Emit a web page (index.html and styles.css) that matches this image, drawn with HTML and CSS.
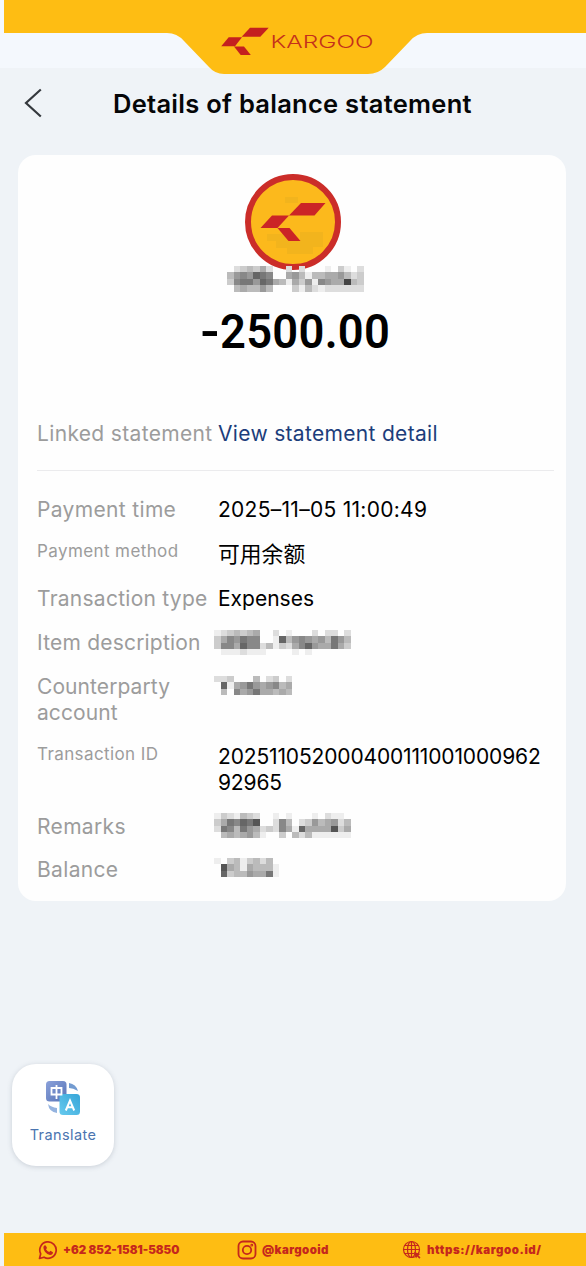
FILE: index.html
```html
<!DOCTYPE html>
<html lang="en">
<head>
<meta charset="utf-8">
<title>Details of balance statement</title>
<link rel="stylesheet" href="styles.css">
</head>
<body>
<div class="page">
  <header class="banner">
    <svg class="banner-art" viewBox="0 0 586 76" width="586" height="76">
      <path fill="#febd13" d="M4 0H586V33H427Q417 33 410 41L385 67Q378 74 368 74H224Q215 74 209 67L184 41Q177 33 167 33H4Z"/>
      <g fill="#c4201f">
        <path d="M250 27.8H268.7L260.3 36.8H241.7Z"/>
        <path d="M228.7 37.2H242L235 46.2H221.2Z"/>
        <path d="M234 46.6H244L250.8 55H240.7Z"/>
      </g>
      <text class="brand" x="270.5" y="47.9" textLength="103" lengthAdjust="spacingAndGlyphs">KARGOO</text>
    </svg>
  </header>
  <div class="titlebar">
    <svg class="back" viewBox="0 0 20 32" width="20" height="32"><path d="M17.8 2.5L3 16L17.8 29.5" fill="none" stroke="#34383d" stroke-width="2.2"/></svg>
    <h1 class="title">Details of balance statement</h1>
  </div>
  <main class="card">
    <div class="summary">
      <svg class="avatar" viewBox="0 0 96 96" width="96" height="96">
        <circle cx="48" cy="48" r="45" fill="#fcb91c" stroke="#cb2d29" stroke-width="6"/>
        <path fill="#edb01f" d="M40 23H53V29H40ZM55 58H78V73H68V80H42V74H31V67H22V60H43V67H55Z" opacity=".65"/>
        <g fill="#cb2426"><path d="M56 29H80.5L69.5 41.5H44Z"/><path d="M27 41.5H44L32.5 54H15.5Z"/><path d="M32.5 54H44.5L55.5 67H43.5Z"/></g>
      </svg>
      <div class="mosaic name"></div>
      <div class="amount"><span class="minus">-</span><span class="digits">2500.00</span></div>
    </div>
    <div class="linked"><span class="label l-linked">Linked statement</span><a class="link">View statement detail</a></div>
    <div class="rows">
      <span class="label l-time">Payment time</span><span class="value v-time">2025–11–05 11:00:49</span>
      <span class="label small">Payment method</span><span class="value cjk" lang="zh">可用余额</span>
      <span class="label l-type">Transaction type</span><span class="value v-type">Expenses</span>
      <span class="label l-item">Item description</span><span class="mosaic item"></span>
      <span class="label l-counter">Counterparty account</span><span class="mosaic account"></span>
      <span class="label small l-id">Transaction ID</span><span class="value v-id">202511052000400111001000962<br>92965</span>
      <span class="label l-remarks">Remarks</span><span class="mosaic remarks"></span>
      <span class="label l-balance">Balance</span><span class="mosaic balance"></span>
    </div>
  </main>
  <div class="translate">
    <svg viewBox="0 0 36 36" width="36" height="36">
      <defs>
        <linearGradient id="a" x1="0" y1="0" x2="1" y2="1"><stop stop-color="#8ba1da"/><stop offset="1" stop-color="#5673b6"/></linearGradient>
        <linearGradient id="b" x1="0" y1="1" x2="1" y2="0"><stop stop-color="#67caee"/><stop offset="1" stop-color="#36a5d8"/></linearGradient>
      </defs>
      <rect x="1" y="1" width="20.5" height="20.5" rx="3.5" fill="url(#a)"/>
      <rect x="14.5" y="14" width="20.5" height="21" rx="3.5" fill="url(#b)"/>
      <path d="M24 3Q31 4 33 11Q28 8 24 8Z" fill="#739bd0"/>
      <path d="M3 24Q4 32 12 33V28Q6 27 3 24Z" fill="#94b3df"/>
      <path d="M6.5 8H16.5V14.5H6.5ZM11.5 5V19" fill="none" stroke="#fff" stroke-width="1.8"/>
      <path d="M20.8 30.5L25 20.5L29.2 30.5M22.3 27.2H27.7" fill="none" stroke="#fff" stroke-width="2"/>
    </svg>
    <span class="translate-label">Translate</span>
  </div>
  <footer class="footer">
    <span class="contact phone">
      <svg viewBox="0 0 20 20" width="20" height="20"><path d="M1.5 18.5L2.7 13.8A8.2 8.2 0 1 1 6 17.2Z" fill="none" stroke="#c5271d" stroke-width="1.7" stroke-linejoin="round"/><path d="M6.2 5.6L7.8 5.4L9 8L8 9.3Q9.2 11.3 11.2 12L12.4 10.8L15 12.2Q14.8 15 12 14.9Q6 13.5 5.4 7.8Q5.4 6.3 6.2 5.6Z" fill="#c5271d"/></svg>
      <span>+62 852-1581-5850</span>
    </span>
    <span class="contact insta">
      <svg viewBox="0 0 20 20" width="20" height="20" fill="none" stroke="#c5271d" stroke-width="1.8"><rect x="1.5" y="1.5" width="17" height="17" rx="4.5"/><circle cx="10" cy="10" r="4.2"/><circle cx="14.8" cy="5.2" r=".5"/></svg>
      <span>@kargooid</span>
    </span>
    <span class="contact web">
      <svg viewBox="0 0 20 20" width="20" height="20" fill="none" stroke="#c5271d" stroke-width="1.2"><circle cx="9.5" cy="9.5" r="8"/><ellipse cx="9.5" cy="9.5" rx="4" ry="8"/><path d="M9.5 1.5V17.5M1.5 9.5H17.5M2.5 5.5H16.5M2.5 13.5H12"/><path d="M12 12L18.5 14L16.4 15.3L18.5 17.5L17.3 18.7L15.2 16.5L14 18.5Z" fill="#c5271d" stroke="none"/></svg>
      <span>https://kargoo.id/</span>
    </span>
  </footer>
</div>
<script src="mosaic.js"></script>
</body>
</html>
```
FILE: styles.css
```css
* { box-sizing: border-box; }
body { margin: 0; font-family: Inter, "Noto Sans CJK SC", sans-serif; color: #050607; }
.page { width: 586px; height: 1266px; display: flex; flex-direction: column; background: linear-gradient(#f4f8fd 0 68px, #eff3f7 68px); overflow: hidden; }
svg { display: block; flex: none; }
.banner { height: 76px; flex: none; }
.brand { font: 300 17.5px Inter, sans-serif; fill: #c4301c; }
.titlebar { height: 79px; flex: none; display: flex; padding: 11px 0 0 23px; }
.title { margin: 0 0 0 70px; font-size: 25.5px; font-weight: 600; line-height: 33px; letter-spacing: .27px; white-space: nowrap; }
.card { width: 548px; height: 746px; flex: none; margin-left: 18px; border-radius: 18px; background: #fefefe; padding: 19px 12px 0 19px; display: flex; flex-direction: column; }
.summary { display: flex; flex-direction: column; align-items: center; height: 246px; margin-right: 8px; }
.avatar { margin-left: 2px; }
.mosaic { display: block; height: 26px; }
.name { margin: -4px 0 0 8px; }
.amount { display: flex; align-self: flex-start; margin: 12px 0 0 163px; font: 600 49px/56px Roboto, sans-serif; color: #000; }
.minus { width: 20px; transform: scaleX(1.1); transform-origin: left; }
.digits { letter-spacing: .3px; transform: scaleX(.925); transform-origin: left; }
.linked { display: grid; grid-template-columns: 181px 1fr; height: 51px; padding-top: 1px; border-bottom: 1px solid #ebebed; }
.label, .value, .link { font-size: 21px; font-weight: 400; line-height: 26px; white-space: nowrap; }
.label { color: #9c9c9c; letter-spacing: .34px; }
.link { color: #1c3d7b; letter-spacing: .32px; }
.rows { display: grid; grid-template-columns: 181px 1fr; row-gap: 18.3px; padding-top: 26px; }
.value { color: #000; }
.v-time { letter-spacing: .28px; }
.v-id { letter-spacing: -.15px; }
.label.small { font-size: 17px; line-height: 22px; letter-spacing: .4px; margin-top: -1px; }
.label.l-id { margin-top: -1.5px; }
.l-item { letter-spacing: .2px; }
.l-type { letter-spacing: .26px; }
.l-counter { white-space: normal; width: 150px; letter-spacing: .08px; }
.rows .cjk { font-family: "Noto Sans CJK SC", sans-serif; font-size: 21.8px; margin-top: -1px; margin-bottom: 1px; }
.rows .mosaic { margin-left: -4px; }
.rows .account { margin-top: 2px; }
.rows .remarks { margin-top: -2px; }
.l-remarks, .l-balance { margin-top: -1px; }
.translate { width: 102px; height: 102px; flex: none; margin: 163px 0 0 12px; padding-top: 16px; border-radius: 24px; background: #fff; box-shadow: 0 1px 5px rgba(90, 105, 125, .25); display: flex; flex-direction: column; align-items: center; }
.translate-label { margin-top: 9px; font-size: 14.5px; line-height: 20px; letter-spacing: .4px; color: #4b75b0; }
.footer { width: 582px; height: 33px; margin: auto 0 0 4px; background: #febd13; display: grid; grid-template-columns: 199px 165px 1fr; padding-left: 34px; align-items: center; }
.contact { display: flex; align-items: center; gap: 5px; font-size: 11.5px; font-weight: 900; color: #c5271d; white-space: nowrap; }
.insta { letter-spacing: .4px; }
.web { letter-spacing: .58px; }
```
FILE: mosaic.js
```js
// Each hex digit is the grey level of one cell of a redacted field.
const fields = {
  name: ["fdcbcadffdfdfffefcefd", "b989678ffa9bebbaa9bdc", "c877967abeac9e89aa4bc", "fbabb9bfffcebdedddddd"],
  item: ["edcbcbaffdfefffdfddfd", "ca89788ffe6b989a9b79b", "c88a688dbecda869aa7ac", "feeedeeeffffefeffffff"],
  account: ["ddcfffbfdcfd", "f6ea979a98ba", "fbf8a97aabab"],
  remarks: ["ecdebcdffefefffefdeef", "ca78675ffd8bfdc9ba9db", "d78b79adcd8ae6aaaa5ca", "fbaba9beffcfbdbeeeeee"],
  balance: ["efcbecbdbf", "f5abeabbbe", "f6cbb9aa7e"]
};
for (const [name, rows] of Object.entries(fields)) {
  const cols = rows[0].length;
  let cells = "";
  rows.forEach((row, y) => [...row].forEach((d, x) => {
    if (d !== "f") cells += `<rect x="${x * 6.52}" y="${y * 6.4}" width="6.52" height="6.4" fill="#${d.repeat(3)}"/>`;
  }));
  document.querySelector("." + name).innerHTML =
    `<svg width="${cols * 6.52}" height="${rows.length * 6.4}" shape-rendering="crispEdges">${cells}</svg>`;
}
```
